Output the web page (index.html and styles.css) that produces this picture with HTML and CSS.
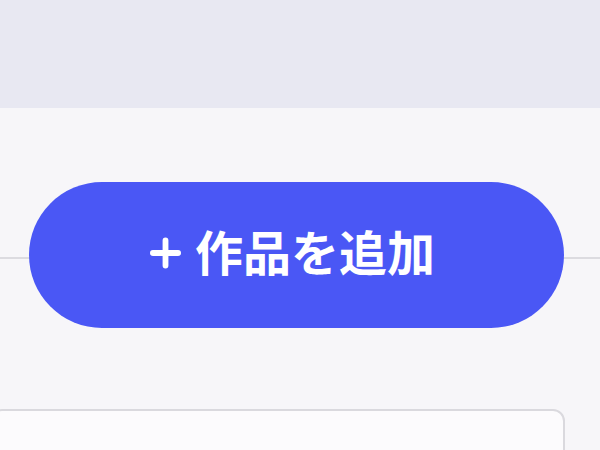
FILE: index.html
```html
<!DOCTYPE html>
<html lang="ja">
<head>
    <meta charset="UTF-8">
    <meta name="viewport" content="width=device-width, initial-scale=1.0">
    <title>作品を追加</title>
    <link rel="stylesheet" href="styles.css">
</head>
<body>
    <div class="topbar"></div>
    <div class="action-row">
        <button class="btn-add" type="button">
            <svg class="icon-plus" viewBox="0 0 32 32" fill="none" stroke="currentColor" stroke-width="6" stroke-linecap="round">
                <path d="M16 3v26M3 16h26"/>
            </svg>
            <span>作品を追加</span>
        </button>
    </div>
    <div class="card"></div>
</body>
</html>
```

FILE: styles.css
```css
body {
    margin: 0;
    background-color: #f7f6f9;
    font-family: "Noto Sans CJK JP", "Noto Sans", sans-serif;
    overflow: hidden;
}
.topbar {
    height: 108px;
    background-color: #e8e8f2;
}
.action-row {
    margin-top: 74px;
    padding-left: 29px;
    height: 146px;
    display: flex;
    align-items: center;
    background: linear-gradient(#dcdbe0, #dcdbe0) 0 75px / 100% 2px no-repeat;
}
.btn-add {
    width: 535px;
    height: 146px;
    border: none;
    border-radius: 73px;
    background-color: #4a57f5;
    color: #fff;
    font-family: inherit;
    font-size: 48px;
    font-weight: 700;
    display: flex;
    align-items: center;
    justify-content: center;
    gap: 14px;
    padding: 0 8px 10px 0;
    cursor: pointer;
}
.icon-plus {
    width: 31px;
    height: 32px;
    margin-top: 6px;
}
.card {
    margin-top: 81px;
    margin-left: -10px;
    width: 571px;
    height: 200px;
    border: 2px solid #dad9de;
    border-radius: 12px;
    background-color: #fcfbfd;
}
```
